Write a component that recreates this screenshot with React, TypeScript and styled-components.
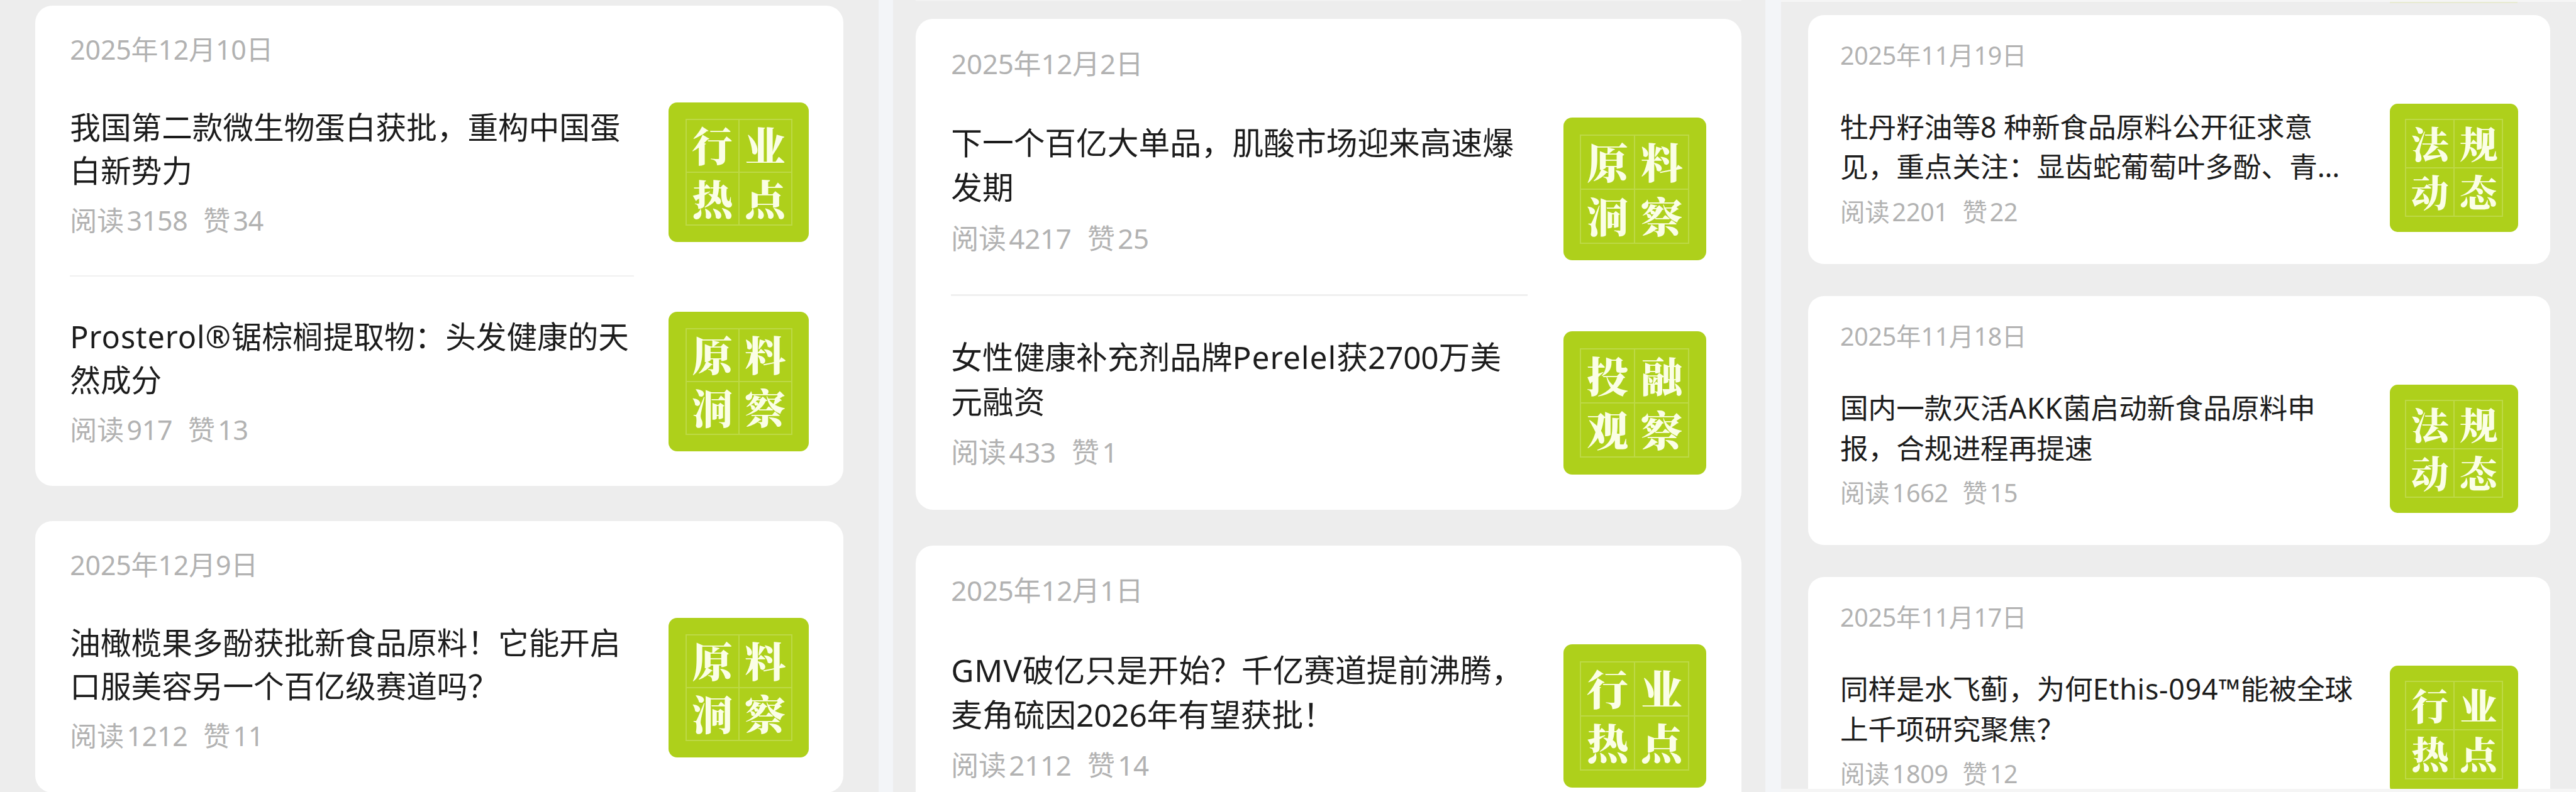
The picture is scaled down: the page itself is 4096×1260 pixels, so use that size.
import { Fragment } from "react";
import styled, { createGlobalStyle } from "styled-components";

type Article = {
  title: string[];
  reads: number;
  likes: number;
  tag: string;
};

type DayGroup = {
  date: string;
  articles: Article[];
};

type Tail = {
  left: number;
  width: number;
  color: string;
};

type FeedColumn = {
  unit: number;
  width: number;
  top: number;
  left: number;
  cardWidth: number;
  framed?: boolean;
  tail?: Tail;
  days: DayGroup[];
};

// every size inside a column is a multiple of its own unit
const u = (n: number) => `calc(${n} * var(--u))`;

const GlobalStyle = createGlobalStyle`
  html,
  body {
    margin: 0;
    padding: 0;
    background: #ededed;
  }
  * {
    box-sizing: border-box;
  }
`;

const Page = styled.div`
  display: flex;
  width: 4096px;
  height: 1260px;
  overflow: hidden;
  background: #f3f5f8;
  font-family: "Noto Sans", "Noto Sans CJK SC", sans-serif;
`;

const Column = styled.section<{
  $unit: number;
  $width: number;
  $top: number;
  $left: number;
  $framed?: boolean;
}>`
  --u: ${(p) => p.$unit}px;
  flex: none;
  display: flex;
  flex-direction: column;
  gap: ${u(65.5)};
  width: ${(p) => p.$width}px;
  height: 1260px;
  padding-top: ${(p) => p.$top}px;
  padding-left: ${(p) => p.$left}px;
  border: solid #f5f5f5;
  border-width: ${(p) => (p.$framed ? "3px 0 5px" : "0")};
  overflow: hidden;
  background: #ededed;
`;

const Gutter = styled.div<{ $width: number }>`
  flex: none;
  width: ${(p) => p.$width}px;
  background: #f3f5f8;
`;

// last visible pixels of whatever is scrolled out above the first card
const ScrolledTail = styled.div<{ $tail: Tail; $top: number }>`
  flex: none;
  width: ${(p) => p.$tail.width}px;
  height: 2px;
  margin-top: ${(p) => -p.$top}px;
  margin-left: ${(p) => p.$tail.left}px;
  margin-bottom: calc(${(p) => p.$top - 2}px - 65.5 * var(--u));
  background: ${(p) => p.$tail.color};
`;

const Card = styled.article<{ $width: number }>`
  flex: none;
  width: ${(p) => p.$width}px;
  padding: ${u(47)} ${u(64.5)} ${u(65)};
  border-radius: ${u(32)};
  background: #fff;
`;

const DateLabel = styled.div`
  height: ${u(70)};
  margin-bottom: ${u(63)};
  font-size: ${u(50.3)};
  line-height: ${u(70)};
  color: #b2b2b2;
  white-space: nowrap;
`;

const Entry = styled.div`
  display: flex;
  justify-content: space-between;
  height: ${u(260.5)};
`;

const Divider = styled.div`
  width: ${u(1051)};
  height: ${u(3)};
  margin: ${u(61.5)} 0 ${u(65)};
  background: #f0f0f0;
`;

const Body = styled.div`
  padding-top: ${u(6)};
`;

const Title = styled.h3`
  margin: 0;
  font-size: ${u(57)};
  font-weight: 400;
  line-height: ${u(81.3)};
  color: #1c1c1c;
  white-space: pre;
`;

const TitleLine = styled.div`
  height: ${u(81.3)};
`;

const Latin = styled.span<{ $spacing: number }>`
  letter-spacing: ${(p) => p.$spacing}em;
`;

const Stats = styled.div`
  display: flex;
  gap: ${u(29)};
  margin-top: ${u(21.5)};
  font-size: ${u(50.3)};
  line-height: ${u(60)};
  color: #b2b2b2;
`;

const Stat = styled.span`
  display: flex;
  gap: ${u(5)};
`;

const Thumb = styled.div`
  flex: none;
  width: ${u(260.5)};
  height: ${u(260.5)};
  padding: ${u(30.5)};
  border-radius: ${u(16)};
  background: #aed01b;
`;

const TagGrid = styled.div`
  display: grid;
  grid-template-columns: 1fr 1fr;
  grid-template-rows: 1fr 1fr;
  gap: 2px;
  width: 100%;
  height: 100%;
  padding: 2px;
  background: #bdd946;
`;

const TagCell = styled.span`
  display: flex;
  align-items: center;
  justify-content: center;
  padding-bottom: ${u(5)};
  background: #aed01b;
  font-family: "Noto Serif CJK SC", "Noto Sans CJK SC", serif;
  font-size: ${u(76)};
  font-weight: 900;
  line-height: 1;
  color: #fbfee6;
`;

const columns: FeedColumn[] = [
  {
    unit: 0.8533,
    width: 1397,
    top: 9.3,
    left: 56.3,
    cardWidth: 1284.5,
    days: [
      {
        date: "2025年12月10日",
        articles: [
          {
            title: ["我国第二款微生物蛋白获批，重构中国蛋", "白新势力"],
            reads: 3158,
            likes: 34,
            tag: "行业热点",
          },
          {
            title: ["Prosterol®锯棕榈提取物：头发健康的天", "然成分"],
            reads: 917,
            likes: 13,
            tag: "原料洞察",
          },
        ],
      },
      {
        date: "2025年12月9日",
        articles: [
          {
            title: ["油橄榄果多酚获批新食品原料！它能开启", "口服美容另一个百亿级赛道吗？"],
            reads: 1212,
            likes: 11,
            tag: "原料洞察",
          },
        ],
      },
    ],
  },
  {
    unit: 0.8722,
    width: 1387,
    top: 30.3,
    left: 36,
    cardWidth: 1313,
    tail: { left: 0, width: 1313, color: "#f2f2f2" },
    days: [
      {
        date: "2025年12月2日",
        articles: [
          {
            title: ["下一个百亿大单品，肌酸市场迎来高速爆", "发期"],
            reads: 4217,
            likes: 25,
            tag: "原料洞察",
          },
          {
            title: ["女性健康补充剂品牌Perelel获2700万美", "元融资"],
            reads: 433,
            likes: 1,
            tag: "投融观察",
          },
        ],
      },
      {
        date: "2025年12月1日",
        articles: [
          {
            title: ["GMV破亿只是开始？千亿赛道提前沸腾，", "麦角硫因2026年有望获批！"],
            reads: 2112,
            likes: 14,
            tag: "行业热点",
          },
        ],
      },
    ],
  },
  {
    unit: 0.7834,
    width: 1264,
    top: 20.9,
    left: 43.4,
    cardWidth: 1179.5,
    framed: true,
    tail: { left: 925, width: 203, color: "#e7ead0" },
    days: [
      {
        date: "2025年11月19日",
        articles: [
          {
            title: ["牡丹籽油等8 种新食品原料公开征求意", "见，重点关注：显齿蛇葡萄叶多酚、青..."],
            reads: 2201,
            likes: 22,
            tag: "法规动态",
          },
        ],
      },
      {
        date: "2025年11月18日",
        articles: [
          {
            title: ["国内一款灭活AKK菌启动新食品原料申", "报，合规进程再提速"],
            reads: 1662,
            likes: 15,
            tag: "法规动态",
          },
        ],
      },
      {
        date: "2025年11月17日",
        articles: [
          {
            title: ["同样是水飞蓟，为何Ethis-094™能被全球", "上千项研究聚焦？"],
            reads: 1809,
            likes: 12,
            tag: "行业热点",
          },
        ],
      },
    ],
  },
];

const DIGIT_SPACING = -0.006;
const LETTER_SPACING = 0.018;

// spaces out runs of latin letters and digits inside chinese text
const MixedText = ({ text }: { text: string }) => (
  <>
    {text.split(/([A-Za-z0-9®™.\-]+)/).map((part, key) =>
      key % 2 ? (
        <Latin key={key} $spacing={/[A-Za-z]/.test(part) ? LETTER_SPACING : DIGIT_SPACING}>
          {part}
        </Latin>
      ) : (
        <Fragment key={key}>{part}</Fragment>
      )
    )}
  </>
);

const ArticleEntry = ({ article }: { article: Article }) => (
  <Entry>
    <Body>
      <Title>
        {article.title.map((line, key) => (
          <TitleLine key={key}>
            <MixedText text={line} />
          </TitleLine>
        ))}
      </Title>
      <Stats>
        <Stat>
          阅读<Latin $spacing={DIGIT_SPACING}>{article.reads}</Latin>
        </Stat>
        <Stat>
          赞<Latin $spacing={DIGIT_SPACING}>{article.likes}</Latin>
        </Stat>
      </Stats>
    </Body>
    <Thumb>
      <TagGrid>
        {article.tag.split("").map((char, key) => (
          <TagCell key={key}>{char}</TagCell>
        ))}
      </TagGrid>
    </Thumb>
  </Entry>
);

export default function App() {
  return (
    <>
      <GlobalStyle />
      <Page>
        {columns.map((column, columnKey) => (
          <Fragment key={columnKey}>
            {columnKey > 0 && <Gutter $width={columnKey === 1 ? 23 : 25} />}
            <Column
              $unit={column.unit}
              $width={column.width}
              $top={column.top}
              $left={column.left}
              $framed={column.framed}
            >
              {column.tail && <ScrolledTail $tail={column.tail} $top={column.top} />}
              {column.days.map((day) => (
                <Card key={day.date} $width={column.cardWidth}>
                  <DateLabel>
                    <MixedText text={day.date} />
                  </DateLabel>
                  {day.articles.map((article, key) => (
                    <Fragment key={key}>
                      {key > 0 && <Divider />}
                      <ArticleEntry article={article} />
                    </Fragment>
                  ))}
                </Card>
              ))}
            </Column>
          </Fragment>
        ))}
      </Page>
    </>
  );
}
